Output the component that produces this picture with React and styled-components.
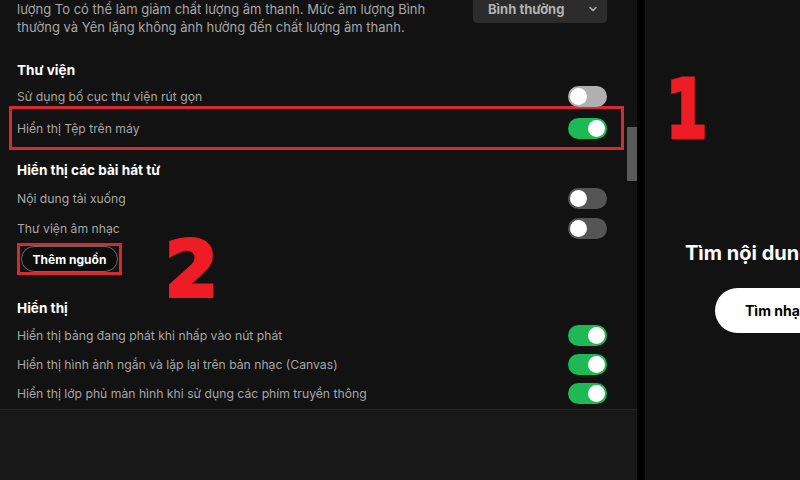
import styled, { createGlobalStyle } from 'styled-components';

const GlobalStyle = createGlobalStyle`
    html, body {
        margin: 0;
        padding: 0;
        background: #000;
    }
    * {
        box-sizing: border-box;
    }
`

const Screen = styled.div`
    position: relative;
    display: flex;
    width: 800px;
    height: 480px;
    overflow: hidden;
    background: #000;
    font-family: Inter, "Noto Sans", sans-serif;
`

const LeftPanel = styled.div`
    position: relative;
    display: flex;
    flex-direction: column;
    width: 637px;
    background: #121212;
`

const ScrollArea = styled.div`
    display: flex;
    flex-direction: column;
    height: 409px;
    padding: 0 30px 0 17px;
    overflow: hidden;
`

const Footer = styled.div`
    flex: 1;
    background: #181818;
    border-top: 1px solid #262626;
`

const ScrollThumb = styled.div`
    position: absolute;
    top: 127px;
    right: 0;
    width: 10px;
    height: 54px;
    background: #5a5a5a;
`

const Divider = styled.div`
    width: 8px;
    background: #000;
`

const RightPanel = styled.div`
    flex: 1;
    display: flex;
    flex-direction: column;
    padding: 240px 0 0 40px;
    background: #121212;
    overflow: hidden;
    white-space: nowrap;
`

const EmptyTitle = styled.h2`
    margin: 0;
    font-size: 20px;
    font-weight: 700;
    line-height: 26px;
    color: #fff;
`

const FindButton = styled.button`
    display: flex;
    align-items: center;
    margin: 22px 0 0 30px;
    padding: 0 30px;
    height: 45px;
    width: 160px;
    border: 0;
    border-radius: 23px;
    background: #fff;
    color: #000;
    font-family: inherit;
    font-size: 14px;
    font-weight: 700;
`

const DescRow = styled.div`
    display: flex;
    justify-content: space-between;
    align-items: flex-start;
`

const Desc = styled.p`
    margin: 0;
    width: 420px;
    font-size: 13px;
    line-height: 18px;
    color: #a7a7a7;
`

// the dropdown is scrolled half out of view, only its lower part shows
const Select = styled.div`
    display: flex;
    align-items: center;
    justify-content: space-between;
    width: 134px;
    height: 23px;
    padding: 0 8px 5px 15px;
    border-radius: 0 0 4px 4px;
    background: #2c2c2c;
    color: #b3b3b3;
    font-size: 13px;
    font-weight: 700;
`

const Heading = styled.h3`
    display: flex;
    align-items: center;
    margin: ${({ $top }) => $top}px 0 0;
    height: ${({ $h }) => $h || 26}px;
    font-size: 13.6px;
    font-weight: 700;
    color: #fff;
`

const Row = styled.div`
    display: flex;
    align-items: center;
    justify-content: space-between;
    height: ${({ $h }) => $h || 29}px;
    padding-top: ${({ $pt }) => $pt || 0}px;
    font-size: 12.2px;
    color: #a7a7a7;
`

const Highlight = styled.div`
    margin: 0 -17px 0 -8px;
    padding: 0 14px 0 5px;
    border: 3px solid #d42a32;
`

const Track = styled.span`
    position: relative;
    display: inline-block;
    flex-shrink: 0;
    width: 39px;
    height: 21px;
    border-radius: 11px;
    background: ${({ $on, $light }) => ($on ? '#1db954' : $light ? '#b0b0b0' : '#555')};
`

const Knob = styled.span`
    position: absolute;
    top: 2px;
    left: ${({ $on }) => ($on ? '20px' : '2px')};
    width: 17px;
    height: 17px;
    border-radius: 50%;
    background: #fff;
`

const ButtonBox = styled.div`
    display: flex;
    align-items: center;
    width: 105px;
    height: 32px;
    padding: 0 1px;
    border: 3px solid #d42a32;
`

const PillButton = styled.button`
    width: 97px;
    height: 26px;
    border: 1px solid #6a6a6a;
    border-radius: 13px;
    background: #0d0d0d;
    color: #fff;
    font-family: inherit;
    font-size: 12px;
    font-weight: 700;
`

const Mark = styled.span`
    position: absolute;
    left: ${({ $x }) => $x}px;
    top: ${({ $y }) => $y}px;
    font-family: "DejaVu Sans", sans-serif;
    font-size: ${({ $size }) => $size}px;
    font-weight: 700;
    line-height: 1;
    color: #ee1c25;
    -webkit-text-stroke: 4px #ee1c25;
    transform: scaleX(${({ $sx }) => $sx || 1});
    transform-origin: left top;
`

const Toggle = ({ on, light }) => (
    <Track $on={on} $light={light}>
        <Knob $on={on} />
    </Track>
)

const App = () => {
    return (
        <Screen>
            <GlobalStyle />
            <LeftPanel>
                <ScrollArea>
                    <DescRow>
                        <Desc>
                            lượng To có thể làm giảm chất lượng âm thanh. Mức âm lượng Bình thường và Yên lặng không ảnh hưởng đến chất lượng âm thanh.
                        </Desc>
                        <Select>
                            <span>Bình thường</span>
                            <svg width="12" height="12" viewBox="0 0 24 24" fill="none" stroke="#b3b3b3" strokeWidth="3" strokeLinecap="round" strokeLinejoin="round">
                                <path d="M6 9l6 6 6-6" />
                            </svg>
                        </Select>
                    </DescRow>

                    <Heading $top={21}>Thư viện</Heading>
                    <Row $h={23} $pt={4}>
                        <span>Sử dụng bố cục thư viện rút gọn</span>
                        <Toggle light />
                    </Row>
                    <Highlight>
                        <Row $h={38}>
                            <span>Hiển thị Tệp trên máy</span>
                            <Toggle on />
                        </Row>
                    </Highlight>

                    <Heading $top={7}>Hiển thị các bài hát từ</Heading>
                    <Row $h={30}>
                        <span>Nội dung tải xuống</span>
                        <Toggle />
                    </Row>
                    <Row $h={30}>
                        <span>Thư viện âm nhạc</span>
                        <Toggle />
                    </Row>
                    <ButtonBox>
                        <PillButton type="button">Thêm nguồn</PillButton>
                    </ButtonBox>

                    <Heading $top={20}>Hiển thị</Heading>
                    <Row>
                        <span>Hiển thị bảng đang phát khi nhấp vào nút phát</span>
                        <Toggle on />
                    </Row>
                    <Row>
                        <span>Hiển thị hình ảnh ngắn và lặp lại trên bản nhạc (Canvas)</span>
                        <Toggle on />
                    </Row>
                    <Row>
                        <span>Hiển thị lớp phủ màn hình khi sử dụng các phím truyền thông</span>
                        <Toggle on />
                    </Row>
                </ScrollArea>
                <Footer />
                <ScrollThumb />
            </LeftPanel>
            <Divider />
            <RightPanel>
                <EmptyTitle>Tìm nội dung của bạn trên máy</EmptyTitle>
                <FindButton type="button">Tìm nhạc trên máy</FindButton>
            </RightPanel>
            <Mark $x={666} $y={70} $size={80} $sx={0.74}>1</Mark>
            <Mark $x={165} $y={232} $size={76}>2</Mark>
        </Screen>
    )
}

export default App;
